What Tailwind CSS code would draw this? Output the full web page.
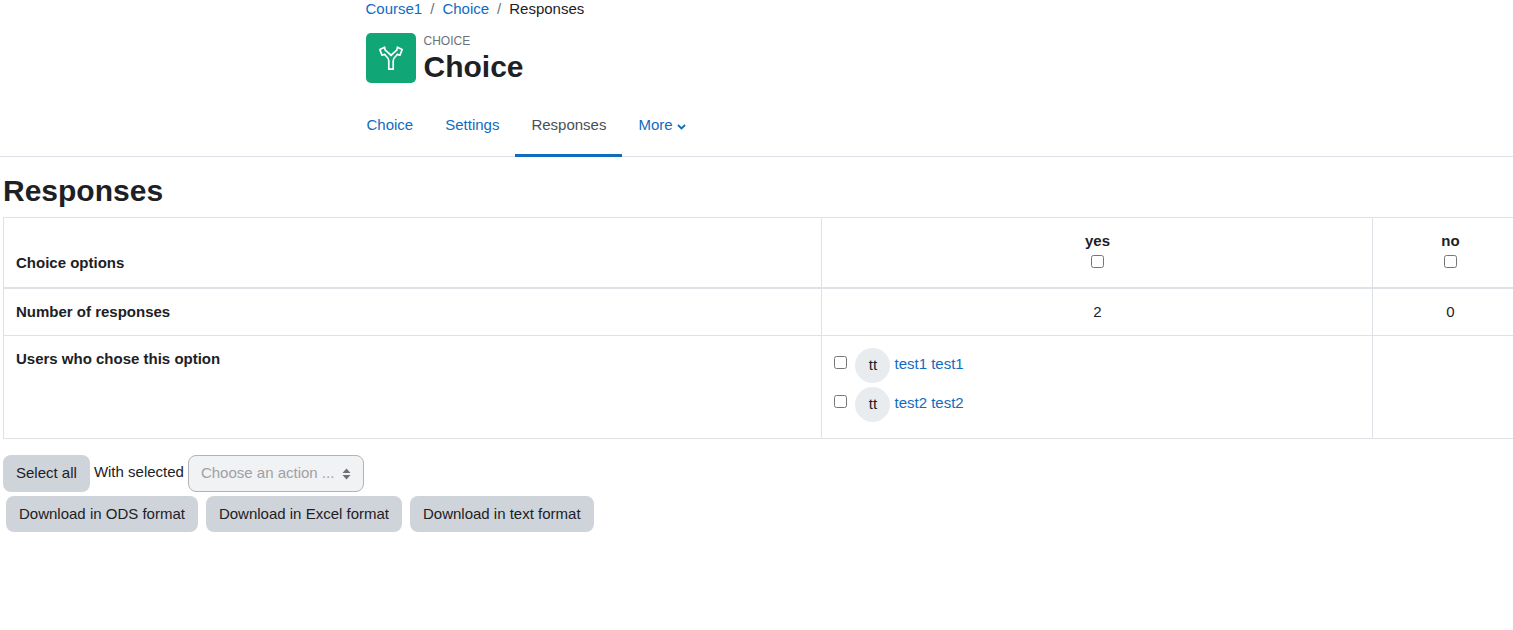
<!DOCTYPE html>
<html>
  <head>
    <meta charset="UTF-8">
    <title>Choice: Responses</title>
    <script src="https://cdn.jsdelivr.net/npm/@tailwindcss/browser@4"></script>
  </head>
  <body class="bg-white text-[#1d2125] text-[15px] leading-[22.5px] font-['Liberation_Sans',Arial,sans-serif] overflow-hidden h-[630px]">
    <!-- Page header -->
    <div class="pl-[365.5px] h-[157px] border-b border-[#dee2e6] flex flex-col">
      <nav class="flex items-center h-[19px] whitespace-nowrap">
        <a href="#" class="text-[#0f6cbf]">Course1</a>
        <span class="px-2 text-[#6a737b]">/</span>
        <a href="#" class="text-[#0f6cbf]">Choice</a>
        <span class="px-2 text-[#6a737b]">/</span>
        <span>Responses</span>
      </nav>
      <div class="flex mt-[14px] h-[50px]">
        <div class="w-[50px] h-[50px] rounded-[5px] bg-[#11a676] flex items-center justify-center">
          <svg class="w-6 h-6" viewBox="0 0 24 24" fill="none" stroke="white" stroke-width="1.7" stroke-linejoin="round">
            <path d="M9.8 23.2V14.5C9.8 12.5 8.5 11.5 7 10L5.6 8.4L3 9.2L0.9 3.6L5.6 1.2L6.2 4.2L8.5 6.2C10 7.4 11.3 8.3 12 9.5C12.7 8.3 14 7.4 15.5 6.2L17.8 4.2L18.4 1.2L23.1 3.6L21 9.2L18.4 8.4L17 10C15.5 11.5 14.2 12.5 14.2 14.5V23.2Z"/>
          </svg>
        </div>
        <div class="ml-2 flex flex-col">
          <span class="text-xs leading-[16px] text-[#6a737b]">CHOICE</span>
          <h1 class="text-[30px] leading-[36px] font-bold">Choice</h1>
        </div>
      </div>
      <ul class="flex mt-auto h-[60px] ml-[-15px] -mb-[1px]">
        <li><a href="#" class="flex items-center h-full px-4 text-[#0f6cbf] border-b-[3px] border-transparent">Choice</a></li>
        <li><a href="#" class="flex items-center h-full px-4 text-[#0f6cbf] border-b-[3px] border-transparent">Settings</a></li>
        <li><a href="#" class="flex items-center h-full px-4 text-[#495057] border-b-[3px] border-[#0f6cbf]">Responses</a></li>
        <li>
          <a href="#" class="flex items-center h-full px-4 text-[#0f6cbf] border-b-[3px] border-transparent">More
            <svg class="w-[9px] h-[6px] ml-[4px] mt-[3px]" viewBox="0 0 9 6" fill="none" stroke="#0f6cbf" stroke-width="1.8"><path d="M1 1l3.5 3.5L8 1"/></svg>
          </a>
        </li>
      </ul>
    </div>

    <h2 class="text-[30px] leading-[36px] font-bold ml-[3px] mt-4">Responses</h2>

    <!-- Responses table -->
    <table class="ml-[3px] mt-2 w-[1525px] table-fixed border-collapse">
      <colgroup>
        <col class="w-[818px]">
        <col class="w-[551px]">
        <col class="w-[156px]">
      </colgroup>
      <tr class="h-[70px]">
        <th class="border border-[#dee2e6] border-b-2 px-3 pb-[12px] text-left align-bottom">Choice options</th>
        <th class="border border-[#dee2e6] border-b-2 pl-[13px] pr-3 align-top pt-3 font-bold">
          <div>yes</div>
          <input type="checkbox" class="block mx-auto mt-[2px] w-[13px] h-[13px]">
        </th>
        <th class="border border-[#dee2e6] border-b-2 px-3 align-top pt-3 font-bold">
          <div>no</div>
          <input type="checkbox" class="block mx-auto mt-[2px] w-[13px] h-[13px]">
        </th>
      </tr>
      <tr class="h-[48px]">
        <th class="border border-[#dee2e6] px-3 text-left">Number of responses</th>
        <td class="border border-[#dee2e6] pl-[13px] pr-3 text-center">2</td>
        <td class="border border-[#dee2e6] px-3 text-center">0</td>
      </tr>
      <tr class="h-[103px]">
        <th class="border border-[#dee2e6] px-3 pt-3 text-left align-top">Users who chose this option</th>
        <td class="border border-[#dee2e6] px-3 pt-3 align-top">
          <div class="flex items-start h-[39px]">
            <input type="checkbox" class="w-[13px] h-[13px] mt-[8px]">
            <span class="ml-2 w-[35px] h-[35px] pl-[1px] rounded-full bg-[#e9ecef] flex items-center justify-center">tt</span>
            <a href="#" class="ml-[4.5px] mt-[5px] text-[#0f6cbf]">test1 test1</a>
          </div>
          <div class="flex items-start h-[39px]">
            <input type="checkbox" class="w-[13px] h-[13px] mt-[8px]">
            <span class="ml-2 w-[35px] h-[35px] pl-[1px] rounded-full bg-[#e9ecef] flex items-center justify-center">tt</span>
            <a href="#" class="ml-[4.5px] mt-[5px] text-[#0f6cbf]">test2 test2</a>
          </div>
        </td>
        <td class="border border-[#dee2e6]"></td>
      </tr>
    </table>

    <!-- Actions -->
    <div class="flex items-start ml-[3px] mt-4 gap-1">
      <button class="h-[37px] px-[13px] rounded-lg bg-[#ced4da]">Select all</button>
      <span class="mt-[6px]">With selected</span>
      <div class="h-[37px] w-[176px] rounded-lg border border-[#b0b4ba] bg-[#f1f2f4] text-[#9da1a6] flex items-center pl-3 pr-[12px] justify-between">
        <span>Choose an action ...</span>
        <svg class="w-[9px] h-[12px]" viewBox="0 0 9 12" fill="#6c7177"><path d="M4.5 0.5L8.5 5H0.5Z M0.5 7H8.5L4.5 11.5Z"/></svg>
      </div>
    </div>
    <div class="flex ml-[6px] mt-[4px] gap-2">
      <button class="h-9 px-[13px] rounded-lg bg-[#ced4da]">Download in ODS format</button>
      <button class="h-9 px-[13px] rounded-lg bg-[#ced4da]">Download in Excel format</button>
      <button class="h-9 px-[13px] rounded-lg bg-[#ced4da]">Download in text format</button>
    </div>
  </body>
</html>
